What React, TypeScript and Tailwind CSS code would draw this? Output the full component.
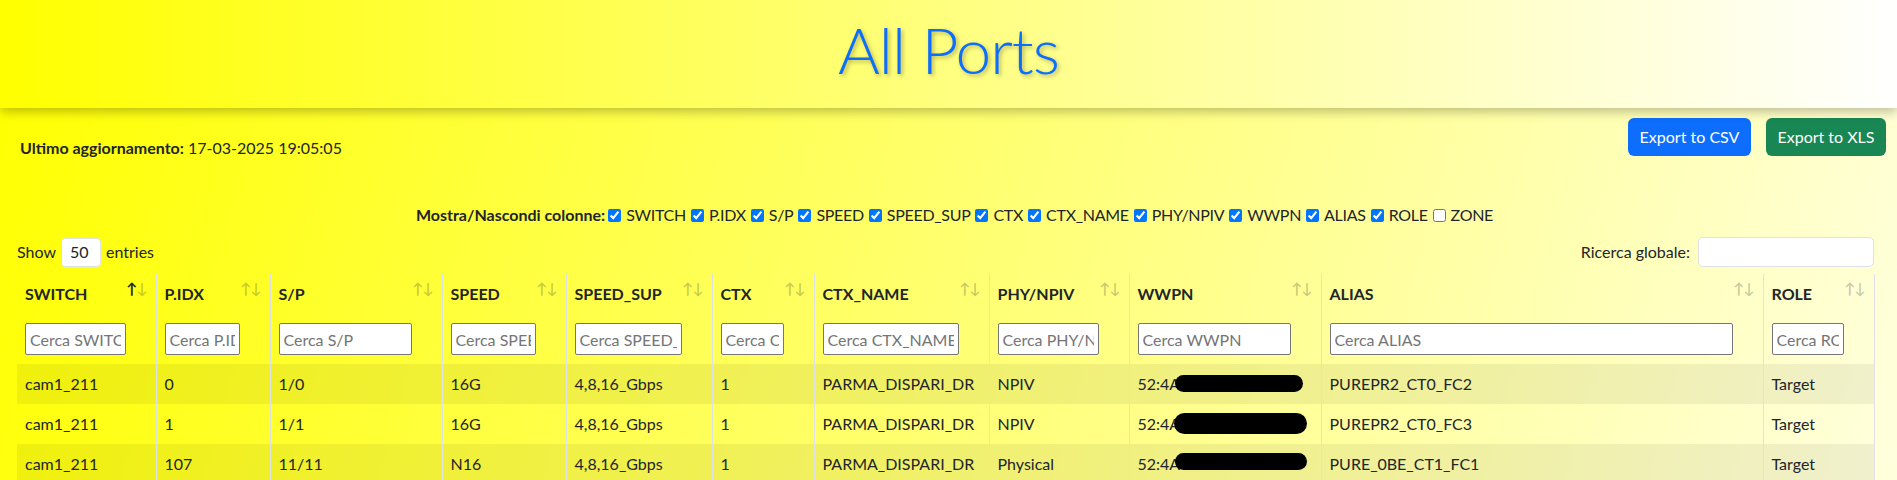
import React from "react";

type Column = {
  name: string;
  width: number;
  sorted?: boolean;
};

const columns: Column[] = [
  { name: "SWITCH", width: 139, sorted: true },
  { name: "P.IDX", width: 114 },
  { name: "S/P", width: 172 },
  { name: "SPEED", width: 124 },
  { name: "SPEED_SUP", width: 146 },
  { name: "CTX", width: 102 },
  { name: "CTX_NAME", width: 175 },
  { name: "PHY/NPIV", width: 140 },
  { name: "WWPN", width: 192 },
  { name: "ALIAS", width: 442 },
  { name: "ROLE", width: 111 },
];

const toggles = [
  { name: "SWITCH", checked: true },
  { name: "P.IDX", checked: true },
  { name: "S/P", checked: true },
  { name: "SPEED", checked: true },
  { name: "SPEED_SUP", checked: true },
  { name: "CTX", checked: true },
  { name: "CTX_NAME", checked: true },
  { name: "PHY/NPIV", checked: true },
  { name: "WWPN", checked: true },
  { name: "ALIAS", checked: true },
  { name: "ROLE", checked: true },
  { name: "ZONE", checked: false },
];

// the blob is the black marker that hides the rest of the WWPN
const rows = [
  { cells: ["cam1_211", "0", "1/0", "16G", "4,8,16_Gbps", "1", "PARMA_DISPARI_DR", "NPIV", "52:4A", "PUREPR2_CT0_FC2", "Target"], blob: "top-[11px] h-[17px] left-[45px] w-[128px]" },
  { cells: ["cam1_211", "1", "1/1", "16G", "4,8,16_Gbps", "1", "PARMA_DISPARI_DR", "NPIV", "52:4A", "PUREPR2_CT0_FC3", "Target"], blob: "top-[9px] h-[21px] left-[44px] w-[133px]" },
  { cells: ["cam1_211", "107", "11/11", "N16", "4,8,16_Gbps", "1", "PARMA_DISPARI_DR", "Physical", "52:4A", "PURE_0BE_CT1_FC1", "Target"], blob: "top-[9px] h-[17px] left-[45px] w-[132px]" },
];

function SortArrows({ active }: { active?: boolean }) {
  return (
    <span className="absolute right-[9px] top-[4px] flex text-[15px] leading-5 tracking-[-1px]">
      <span className={active ? "text-[#212529]" : "text-[#212529]/25"}>↑</span>
      <span className="text-[#212529]/25">↓</span>
    </span>
  );
}

export default function App() {
  return (
    <div className="min-h-[480px] bg-[linear-gradient(105deg,#ffff00_0%,#ffffff_115%)] text-[16px] text-[#212529] font-['Lato',sans-serif]">
      <header className="relative z-10 h-[108px] bg-[linear-gradient(to_right,#ffff00,#ffffff)] shadow-[0_4px_10px_rgba(0,0,0,0.25)]">
        <h1 className="pt-[18px] text-center text-[64px] leading-none font-light tracking-[-1px] text-[#0d6efd] [text-shadow:2px_2px_4px_rgba(0,0,0,0.3)]">
          All Ports
        </h1>
      </header>

      <div className="flex justify-between items-start pt-[10px] pl-[20px] pr-[11px]">
        <p className="pt-[18px] leading-6">
          <span className="font-bold">Ultimo aggiornamento:</span> 17-03-2025 19:05:05
        </p>
        <div className="flex gap-[15px]">
          <button className="w-[123px] h-[38px] rounded-[6px] bg-[#0d6efd] text-white">Export to CSV</button>
          <button className="w-[120px] h-[38px] rounded-[6px] bg-[#198754] text-white">Export to XLS</button>
        </div>
      </div>

      <div className="mt-[43px] flex justify-center items-center leading-6 pl-[14px]">
        <span className="font-bold">Mostra/Nascondi colonne:</span>
        {toggles.map((t) => (
          <label key={t.name} className="flex items-center">
            <input
              type="checkbox"
              defaultChecked={t.checked}
              className="ml-[3px] mr-[5px] w-[13px] h-[13px] accent-[#0075ff]"
            />
            <span className="mr-[2px] tracking-[-0.3px]">{t.name}</span>
          </label>
        ))}
      </div>

      <div className="px-[17px] mt-[10px]">
        <div className="flex justify-between items-center h-[30px] pr-[6px]">
          <div className="flex items-center gap-[5px]">
            <span>Show</span>
            <div className="w-[40px] h-[29px] bg-white border border-[#dee2e6] rounded-[4px] pl-[8px] flex items-center">50</div>
            <span>entries</span>
          </div>
          <div className="flex items-center gap-[8px]">
            <span>Ricerca globale:</span>
            <input className="flex-none w-[176px] h-[30px] bg-white border border-[#dee2e6] rounded-[5px]" />
          </div>
        </div>

        <table className="mt-[7px] table-fixed border-collapse w-[1857px]">
          <colgroup>
            {columns.map((c) => (
              <col key={c.name} style={{ width: c.width }} />
            ))}
          </colgroup>
          <thead>
            <tr>
              {columns.map((c) => (
                <th
                  key={c.name}
                  className="relative text-left font-bold pl-2 pr-[30px] pt-2 pb-2 leading-6 border-r border-[#dee2e6]"
                >
                  {c.name}
                  <SortArrows active={c.sorted} />
                </th>
              ))}
            </tr>
            <tr>
              {columns.map((c) => (
                <td key={c.name} className="pl-2 pr-[30px] py-[9px] border-r border-[#dee2e6]">
                  <input
                    placeholder={`Cerca ${c.name}`}
                    className="block w-full h-[32px] bg-white border border-[#767676] rounded-[2px] px-[4px] text-[16px] placeholder:text-[#757575]"
                  />
                </td>
              ))}
            </tr>
          </thead>
          <tbody>
            {rows.map((r, i) => (
              <tr key={i} className={i % 2 === 0 ? "bg-black/[0.06]" : ""}>
                {r.cells.map((cell, j) => (
                  <td
                    key={j}
                    className="relative px-2 py-2 leading-6 whitespace-nowrap border-r border-[#dee2e6]"
                  >
                    {cell}
                    {j === 8 && <span className={`absolute rounded-full bg-black ${r.blob}`} />}
                  </td>
                ))}
              </tr>
            ))}
          </tbody>
        </table>
      </div>
    </div>
  );
}
